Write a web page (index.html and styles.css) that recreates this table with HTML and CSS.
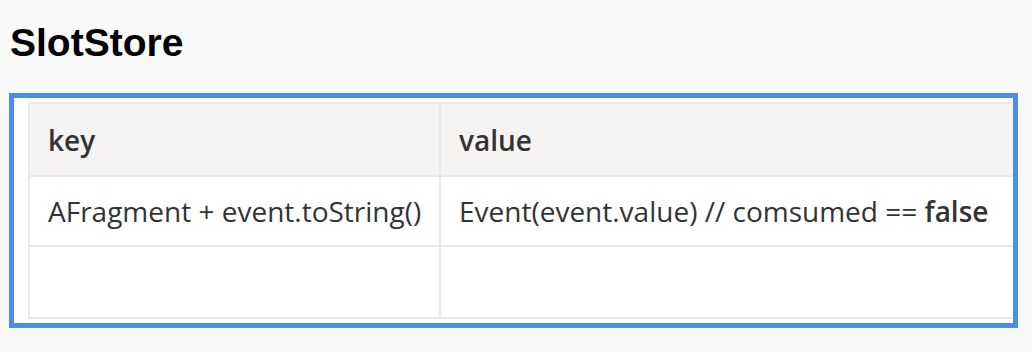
FILE: index.html
```html
<html lang="en">
<head>
  <meta charset="UTF-8" />
  <meta name="viewport" content="width=device-width, initial-scale=1.0"/>
  <title>SlotStore</title>
  <link rel="stylesheet" href="styles.css">
</head>
<body>
  <h2 class="title">SlotStore</h2>

  <!-- key/value table, wider than its box so the right edge gets cut -->
  <div class="frame">
    <table class="slot-table">
      <colgroup>
        <col class="col-key">
        <col class="col-value">
      </colgroup>
      <thead>
        <tr>
          <th>key</th>
          <th>value</th>
        </tr>
      </thead>
      <tbody>
        <tr>
          <td>AFragment + event.toString()</td>
          <td>Event(event.value) // comsumed == <strong>false</strong></td>
        </tr>
        <tr class="empty-row">
          <td></td>
          <td></td>
        </tr>
      </tbody>
    </table>
  </div>
</body>
</html>
```

FILE: styles.css
```css
body {
  margin: 0;
  padding: 0 14px 0 9px;
  background-color: #f9f9f9;
  font-family: 'Open Sans', 'Noto Sans', sans-serif;
}

.title {
  margin: 21px 0 28px;
  padding-left: 1px;
  font-family: 'Liberation Sans', Arial, sans-serif;
  font-size: 39px;
  line-height: 44px;
  font-weight: 700;
  color: #000;
}

.frame {
  border: 5px solid #4a8fe3;
  background-color: #fff;
  padding: 4px 0 4px 14px;
  overflow: hidden;
}

.slot-table {
  table-layout: fixed;
  width: 1053px;
  border-collapse: separate;
  border-spacing: 0;
  border-top: 2px solid #e9e9e9;
  border-left: 2px solid #e9e9e9;
}

.col-key {
  width: 411px;
}

.col-value {
  width: 640px;
}

.slot-table th,
.slot-table td {
  height: 70px;
  box-sizing: border-box;
  padding: 0 18px;
  border-right: 2px solid #e9e9e9;
  border-bottom: 2px solid #e9e9e9;
  font-size: 28px;
  line-height: 40px;
  color: #333;
  text-align: left;
  vertical-align: middle;
  white-space: nowrap;
}

.slot-table th {
  height: 73px;
  background-color: #f5f4f2;
  font-weight: 600;
}

.slot-table .empty-row td {
  height: 72px;
}

.slot-table td strong {
  font-weight: 600;
}
```
